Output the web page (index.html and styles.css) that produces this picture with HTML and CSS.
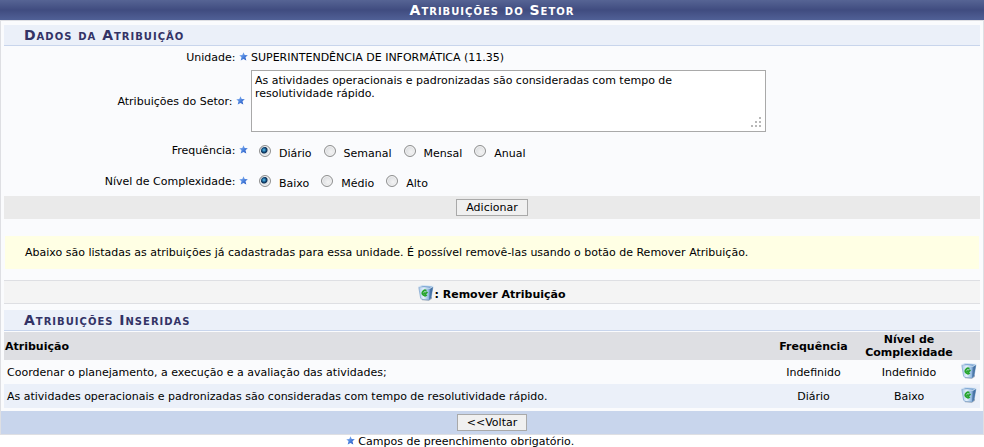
FILE: index.html
```html
<!DOCTYPE html>
<html lang="pt-br">
<head>
	<meta charset="utf-8">
	<title>Atribuições do Setor</title>
	<link rel="stylesheet" href="styles.css">
</head>
<body>
	<svg class="sprite" aria-hidden="true">
		<defs>
			<linearGradient id="glass" x1="0" x2="1" y1="0" y2="0">
				<stop offset="0" stop-color="#a9caea"/>
				<stop offset="0.35" stop-color="#e6f1fb"/>
				<stop offset="0.65" stop-color="#9dc1e6"/>
				<stop offset="1" stop-color="#44719f"/>
			</linearGradient>
			<linearGradient id="blue" x1="0" x2="1" y1="0" y2="1">
				<stop offset="0" stop-color="#a5c8f8"/>
				<stop offset="0.5" stop-color="#4f86e0"/>
				<stop offset="1" stop-color="#1c4cb8"/>
			</linearGradient>
		</defs>
		<symbol id="star" viewBox="0 0 9 9">
			<path fill="url(#blue)" d="M4.5 0.2L5.7 3L8.8 3.2L6.5 5.3L7.3 8.6L4.5 6.9L1.7 8.6L2.5 5.3L0.2 3.2L3.3 3z"/>
		</symbol>
		<symbol id="trash" viewBox="0 0 16 16">
			<path fill="#7d8796" opacity="0.6" d="M4 14L14 12L14 13.8L11 15.8L4 15.2z"/>
			<path fill="url(#glass)" stroke="#6f99c6" stroke-width="0.6" d="M0.8 2.5L14.9 2L13 13L11 15L3.6 14.3L2.6 13z"/>
			<path fill="#35629a" opacity="0.6" d="M11.8 4L14.8 2.4L13 13L11 14.8z"/>
			<path fill="#79a4d2" stroke="#dbe9f6" stroke-width="0.8" d="M0.6 1.6L4.5 0.5L15.3 1.2L11.8 3.4z"/>
			<path fill="none" stroke="#27a52d" stroke-width="1.8" d="M8.4 5.8A2.6 2.6 0 1 0 8.8 9.9M5.8 7.7L7.2 9L9.4 6.8"/>
		</symbol>
	</svg>

	<form class="formulario">
		<h2 class="caption">Atribuições do Setor</h2>
		<div class="corpo">
			<h3 class="subtitulo">Dados da Atribuição</h3>
			<div class="linha">
				<span class="rotulo">Unidade: <svg class="star"><use href="#star"/></svg></span>
				<span>SUPERINTENDÊNCIA DE INFORMÁTICA (11.35)</span>
			</div>
			<div class="linha linha-texto">
				<label class="rotulo" for="descricao">Atribuições do Setor: <svg class="star"><use href="#star"/></svg></label>
				<div class="area">
					<textarea id="descricao">As atividades operacionais e padronizadas são consideradas com tempo de resolutividade rápido.</textarea>
					<svg class="grip" viewBox="0 0 10 10"><path fill="#b8b8b8" d="M8 0h2v2h-2zM4 4h2v2h-2zM8 4h2v2h-2zM0 8h2v2h-2zM4 8h2v2h-2zM8 8h2v2h-2z"/></svg>
				</div>
			</div>
			<div class="linha linha-opcoes" role="radiogroup" aria-labelledby="freq">
				<span class="rotulo" id="freq">Frequência: <svg class="star"><use href="#star"/></svg></span>
				<div class="opcoes">
					<label><input type="radio" name="frequencia" checked><span>Diário</span></label>
					<label><input type="radio" name="frequencia"><span>Semanal</span></label>
					<label><input type="radio" name="frequencia"><span>Mensal</span></label>
					<label><input type="radio" name="frequencia"><span>Anual</span></label>
				</div>
			</div>
			<div class="linha linha-opcoes" role="radiogroup" aria-labelledby="nivel">
				<span class="rotulo" id="nivel">Nível de Complexidade: <svg class="star"><use href="#star"/></svg></span>
				<div class="opcoes">
					<label><input type="radio" name="complexidade" checked><span>Baixo</span></label>
					<label><input type="radio" name="complexidade"><span>Médio</span></label>
					<label><input type="radio" name="complexidade"><span>Alto</span></label>
				</div>
			</div>
			<div class="botoes"><button type="button">Adicionar</button></div>

			<p class="aviso">Abaixo são listadas as atribuições já cadastradas para essa unidade. É possível removê-las usando o botão de Remover Atribuição.</p>

			<div class="legenda"><svg class="trash"><use href="#trash"/></svg>: Remover Atribuição</div>

			<h3 class="subtitulo">Atribuições Inseridas</h3>
			<table class="listagem">
				<thead>
					<tr>
						<th class="nome">Atribuição</th>
						<th class="frequencia">Frequência</th>
						<th class="nivel">Nível de Complexidade</th>
						<th class="acao"></th>
					</tr>
				</thead>
				<tbody>
					<tr>
						<td class="nome">Coordenar o planejamento, a execução e a avaliação das atividades;</td>
						<td>Indefinido</td>
						<td>Indefinido</td>
						<td class="acao"><button type="button" class="remover" aria-label="Remover Atribuição"><svg class="trash"><use href="#trash"/></svg></button></td>
					</tr>
					<tr>
						<td class="nome">As atividades operacionais e padronizadas são consideradas com tempo de resolutividade rápido.</td>
						<td>Diário</td>
						<td>Baixo</td>
						<td class="acao"><button type="button" class="remover" aria-label="Remover Atribuição"><svg class="trash"><use href="#trash"/></svg></button></td>
					</tr>
				</tbody>
			</table>
		</div>
		<div class="botoes rodape"><button type="button">&lt;&lt;Voltar</button></div>
	</form>
	<p class="obrigatorio"><svg class="star"><use href="#star"/></svg> Campos de preenchimento obrigatório.</p>
</body>
</html>
```
FILE: styles.css
```css
*{
	margin: 0;
	padding: 0;
	box-sizing: border-box;
}
body{
	background: #fff;
	color: #000;
	font: 11px/13px Verdana, "DejaVu Sans", sans-serif;
}
button, textarea{
	font: inherit;
	color: inherit;
}
.sprite{
	position: absolute;
	width: 0;
	height: 0;
}
.star{
	width: 9px;
	height: 9px;
}
.trash{
	width: 16px;
	height: 16px;
}
.caption{
	height: 20px;
	background: linear-gradient(#566494, #404c80 50%, #506096);
	color: #fff;
	font-size: 14px;
	line-height: 20px;
	font-variant: small-caps;
	letter-spacing: 1px;
	text-align: center;
}
.corpo{
	padding: 4px 3px 3px;
	background: #fafbfd;
	border: 1px solid #dedfe3;
	border-bottom: 0;
}
.subtitulo{
	height: 21px;
	padding-left: 20px;
	background: #ebf0f9;
	border-bottom: 1px solid #c8d5ec;
	color: #333366;
	font-size: 14px;
	line-height: 20px;
	font-variant: small-caps;
	letter-spacing: 1px;
}

/* formulario */
.linha{
	display: flex;
	align-items: center;
	min-height: 23px;
}
.rotulo{
	width: 25%;
	margin-right: 3px;
	text-align: right;
}
.linha-texto{
	padding: 1px 0;
}
.linha-texto .rotulo{
	padding-right: 3px;
}
.area{
	position: relative;
	width: 515px;
}
.area textarea{
	display: block;
	width: 100%;
	height: 62px;
	padding: 3px 20px 3px 3px;
	background: #fff;
	border: 1px solid #a9a9a9;
	resize: none;
}
.grip{
	position: absolute;
	right: 5px;
	bottom: 5px;
	width: 10px;
	height: 10px;
}
.linha-opcoes{
	min-height: 31px;
}
.linha-opcoes + .linha-opcoes{
	min-height: 30px;
}
.linha-texto + .linha-opcoes{
	margin-top: 2px;
}
.opcoes{
	display: flex;
	gap: 12px;
	padding-left: 8px;
}
.opcoes label{
	display: flex;
	gap: 8px;
}
.opcoes span{
	padding-top: 5px;
}
.opcoes input{
	appearance: none;
	width: 12px;
	height: 12px;
	margin-top: 3px;
	border: 1px solid #8e8f8f;
	border-radius: 50%;
	background: radial-gradient(circle at 60% 60%, #f4f4f4, #cfd2d6);
	box-shadow: inset 0 0 0 1px #f4f4f4;
}
.opcoes input:checked{
	background: radial-gradient(circle at 40% 40%, #62c8ee 0, #14568a 2px, #0d2c50 3px, #dfe3e6 4px);
}
.botoes{
	height: 23px;
	padding-top: 3px;
	background: #eaeaea;
	text-align: center;
}
.botoes button{
	height: 17px;
	padding: 0 9px;
	background: #f0f0f0;
	border: 1px solid #a9a9a9;
	line-height: 15px;
	vertical-align: top;
}
.aviso{
	margin: 17px 1px 11px;
	padding: 10px 20px;
	background: #ffffe4;
}
.legenda{
	display: flex;
	justify-content: center;
	height: 24px;
	margin-bottom: 6px;
	padding-top: 4px;
	background: #f4f4f4;
	border: solid #dedfe3;
	border-width: 1px 0;
	font-weight: bold;
	line-height: 20px;
}

/* listagem */
.listagem{
	width: 100%;
	margin-top: 1px;
	border-collapse: collapse;
	text-align: center;
}
.listagem thead{
	background: #dedfe3;
}
.listagem th{
	height: 28px;
	padding: 1px;
}
.listagem td{
	height: 24px;
	padding: 1px 3px;
}
.listagem .nome{
	text-align: left;
}
.listagem .frequencia{
	width: 93px;
}
.listagem .nivel{
	width: 98px;
}
.listagem .acao{
	width: 22px;
	padding: 0;
}
.listagem tbody tr:nth-child(even){
	background: #ebf0f9;
}
.remover{
	display: block;
	height: 20px;
	margin: 0 auto;
	background: none;
	border: 0;
	cursor: pointer;
}
.rodape{
	height: 24px;
	background: #c8d5ec;
	border: 1px solid #dedfe3;
	border-top: 0;
}
.obrigatorio{
	padding-right: 64px;
	text-align: center;
}
```
